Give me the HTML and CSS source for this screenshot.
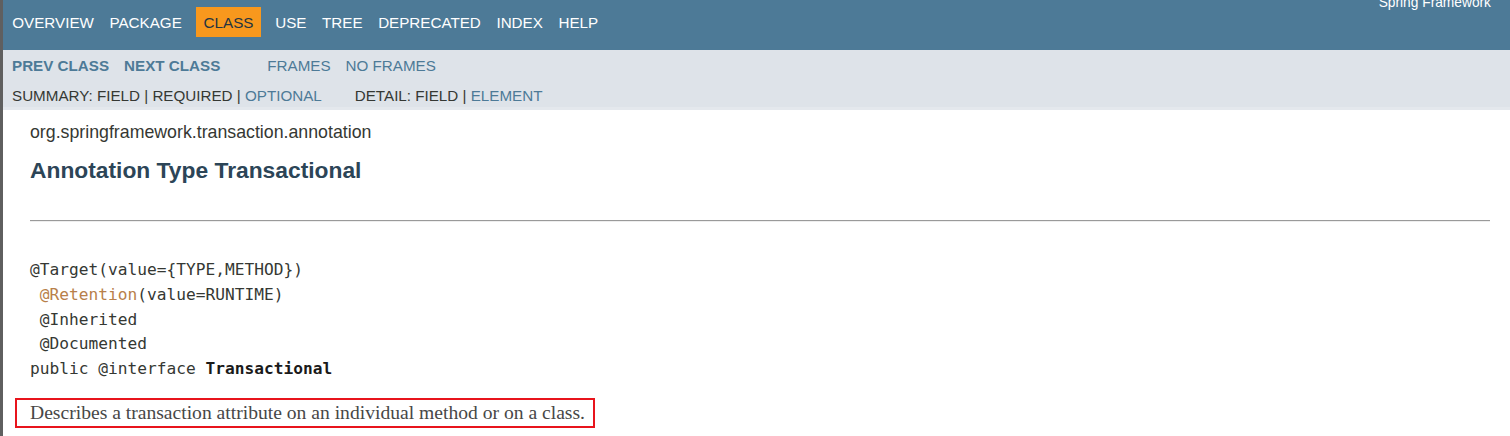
FILE: index.html
```html
<!DOCTYPE html>
<html>
<head>
<meta charset="utf-8">
<link rel="stylesheet" href="styles.css">
</head>
<body>
<div class="frame">
  <header class="top-nav">
    <ul class="nav-list">
      <li>Overview</li>
      <li>Package</li>
      <li class="current">Class</li>
      <li>Use</li>
      <li>Tree</li>
      <li>Deprecated</li>
      <li>Index</li>
      <li>Help</li>
    </ul>
    <div class="about">Spring Framework</div>
  </header>
  <nav class="sub-nav">
    <div class="sub-row">
      <ul class="sub-list">
        <li class="strong-link">Prev Class</li>
        <li class="strong-link">Next Class</li>
      </ul>
      <ul class="sub-list frames">
        <li class="link">Frames</li>
        <li class="link">No Frames</li>
      </ul>
    </div>
    <div class="sub-row">
      <ul class="sub-list">
        <li>Summary:&nbsp;Field&nbsp;|&nbsp;Required&nbsp;|&nbsp;<span class="link">Optional</span></li>
      </ul>
      <ul class="sub-list detail">
        <li>Detail:&nbsp;Field&nbsp;|&nbsp;<span class="link">Element</span></li>
      </ul>
    </div>
  </nav>
  <main class="content">
    <div class="pkg">org.springframework.transaction.annotation</div>
    <h2 class="title">Annotation Type Transactional</h2>
    <hr class="rule">
    <pre class="sig">@Target(value={TYPE,METHOD})
 <span class="ann">@Retention</span>(value=RUNTIME)
 @Inherited
 @Documented
public @interface <b class="name">Transactional</b></pre>
    <div class="block">Describes a transaction attribute on an individual method or on a class.</div>
  </main>
</div>
</body>
</html>
```
FILE: styles.css
```css
html, body {
  margin: 0;
  padding: 0;
  background: #ffffff;
}
.frame {
  border-left: 3px solid #5f5f5f;
  min-height: 436px;
  box-sizing: border-box;
  font-family: Arial, "Liberation Sans", sans-serif;
  color: #353833;
  overflow: hidden;
}
.top-nav {
  position: relative;
  height: 50px;
  box-sizing: border-box;
  padding: 0 0 6px 1.5px;
  background: #4d7a97;
  color: #ffffff;
  display: flex;
  align-items: center;
}
.nav-list {
  display: flex;
  align-items: center;
  list-style: none;
  margin: 0;
  padding: 0;
  font-size: 15.2px;
  text-transform: uppercase;
}
.nav-list li {
  padding: 6.25px 7.8px;
  line-height: 17px;
}
.nav-list li.current {
  background: #f8981d;
  color: #253441;
  margin: 0 6.5px;
  padding: 6.25px 7.5px;
}
.about {
  position: absolute;
  right: 19px;
  top: -5px;
  font-size: 13.75px;
  line-height: 16px;
  color: #ffffff;
}
.sub-nav {
  background: #dee3e9;
  height: 60px;
  box-shadow: inset 0 -3px 0 #e4e8ed;
  font-size: 15.2px;
  text-transform: uppercase;
}
.sub-row {
  display: flex;
  align-items: center;
  height: 30px;
}
.sub-list {
  display: flex;
  list-style: none;
  margin: 0;
  padding: 0 0 0 1.5px;
}
.sub-list li {
  padding: 0 7.5px;
}
.strong-link {
  color: #4d7a97;
  font-weight: bold;
}
.link {
  color: #4d7a97;
}
.sub-list.frames {
  padding-left: 32px;
}
.sub-list.detail {
  padding-left: 18px;
}
.content {
  padding: 0 20px 0 27px;
}
.pkg {
  font-size: 17.75px;
  line-height: 20px;
  margin-top: 12px;
  color: #353833;
}
.title {
  margin: 15px 0 0 0;
  font-size: 22.8px;
  line-height: 26px;
  font-weight: bold;
  color: #2c4557;
}
.rule {
  margin: 37px 0 0 0;
  border: 0;
  border-top: 1px solid #9a9a9a;
  border-bottom: 1px solid #eeeeee;
  height: 0;
}
.sig {
  margin: 36px 0 0 0;
  font-family: "DejaVu Sans Mono", "Liberation Mono", monospace;
  font-size: 16.2px;
  line-height: 24.8px;
  color: #353833;
}
.ann {
  color: #b8804a;
}
.name {
  color: #1a1a1a;
}
.block {
  margin: 16px 0 0 -15px;
  width: 563px;
  height: 26px;
  border: 2px solid #e8141c;
  padding-left: 13px;
  box-sizing: content-box;
  font-family: "Liberation Serif", "Times New Roman", serif;
  font-size: 19.6px;
  line-height: 26px;
  color: #474747;
  white-space: nowrap;
}
```
